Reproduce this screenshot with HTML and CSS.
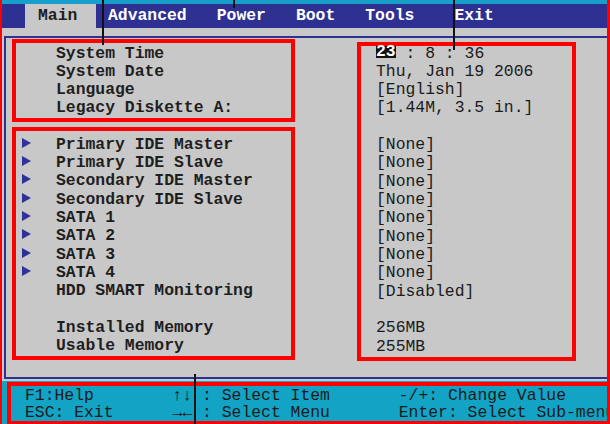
FILE: index.html
```html
<!DOCTYPE html>
<html>
<head>
<meta charset="utf-8">
<title>BIOS Main</title>
<link rel="stylesheet" href="styles.css">
</head>
<body>
<div class="screen">
  <div class="stripe"></div>
  <nav class="menubar">
    <span class="tab tab-main">Main</span>
    <span class="tab tab-adv">Advanced</span>
    <span class="tab">Power</span>
    <span class="tab">Boot</span>
    <span class="tab">Tools</span>
    <span class="tab tab-exit">Exit</span>
  </nav>
  <div class="frame">
    <div class="col-left">
      <div class="box box-sys lbl">
        <div class="row">System Time</div>
        <div class="row">System Date</div>
        <div class="row">Language</div>
        <div class="row">Legacy Diskette A:</div>
      </div>
      <div class="box box-dev lbl">
        <div class="row sub">Primary IDE Master</div>
        <div class="row sub">Primary IDE Slave</div>
        <div class="row sub">Secondary IDE Master</div>
        <div class="row sub">Secondary IDE Slave</div>
        <div class="row sub">SATA 1</div>
        <div class="row sub">SATA 2</div>
        <div class="row sub">SATA 3</div>
        <div class="row sub">SATA 4</div>
        <div class="row">HDD SMART Monitoring</div>
        <div class="row"></div>
        <div class="row">Installed Memory</div>
        <div class="row">Usable Memory</div>
      </div>
    </div>
    <div class="box box-val">
      <div class="vals">
        <div class="row"><span class="hl">23</span> : 8 : 36</div>
        <div class="row">Thu, Jan 19 2006</div>
        <div class="row">[English]</div>
        <div class="row">[1.44M, 3.5 in.]</div>
        <div class="row"></div>
        <div class="row">[None]</div>
        <div class="row">[None]</div>
        <div class="row">[None]</div>
        <div class="row">[None]</div>
        <div class="row">[None]</div>
        <div class="row">[None]</div>
        <div class="row">[None]</div>
        <div class="row">[None]</div>
        <div class="row">[Disabled]</div>
        <div class="row"></div>
        <div class="row">256MB</div>
        <div class="row">255MB</div>
      </div>
    </div>
  </div>
  <footer class="footer">
    <div class="keys">
      <div class="krow">F1:Help        ↑↓ : Select Item       -/+: Change Value</div>
      <div class="krow">ESC: Exit      →← : Select Menu       Enter: Select Sub-menu</div>
    </div>
  </footer>
  <span class="mark m1"></span>
  <span class="mark m2"></span>
  <span class="mark m3"></span>
  <span class="mark m4"></span>
</div>
</body>
</html>
```

FILE: styles.css
```css
html, body {
  margin: 0;
  padding: 0;
  background: #c8c8c8;
}

.screen {
  position: relative;
  width: 610px;
  height: 424px;
  box-sizing: border-box;
  border-left: 2px solid #ff0000;
  border-right: 3px solid #ff0000;
  background: #c8c8c8;
  overflow: hidden;
  font-family: "Courier New", "Nimbus Mono PS", "FreeMono", "Liberation Mono", monospace;
  font-size: 16.4px;
  color: #1e1e1e;
}

.stripe {
  height: 4px;
  background: #189fc9;
}

.menubar {
  display: flex;
  height: 24px;
  line-height: 24px;
  background: #2e3192;
  padding-left: 23px;
  margin-bottom: 8px;
  font-weight: bold;
  color: #ffffff;
  white-space: pre;
}

.tab {
  margin-left: 30px;
}

.tab-main {
  margin-left: 0;
  width: 71px;
  padding-left: 13px;
  box-sizing: border-box;
  background: #c8c8c8;
  color: #1e1e1e;
}

.tab-adv {
  margin-left: 12px;
}

.tab-exit {
  margin-left: 40px;
}

.frame {
  display: flex;
  align-items: flex-start;
  height: 343px;
  box-sizing: border-box;
  margin-left: 2px;
  border: 2px solid #2e3192;
  border-right: 0;
  padding: 1px 0 0 6px;
}

.col-left {
  width: 283px;
  display: flex;
  flex-direction: column;
}

.box {
  border: 4px solid #ff0000;
  box-sizing: border-box;
}

.box-sys {
  padding: 1.5px 0 0 40px;
  margin-bottom: 5px;
}

.box-dev {
  padding: 5px 0 0 40px;
}

.box-val {
  width: 219px;
  height: 319px;
  margin: 3px 0 0 62px;
  padding-left: 15px;
  color: #1a1a1a;
}

.vals {
  margin-top: -1.5px;
}

.row {
  height: 18.33px;
  line-height: 18.33px;
  white-space: pre;
}

.lbl .row {
  font-weight: bold;
}

.sub::before {
  content: "";
  display: inline-block;
  width: 0;
  height: 0;
  border-left: 9px solid #30309a;
  border-top: 5px solid transparent;
  border-bottom: 5px solid transparent;
  margin-left: -34px;
  margin-right: 25px;
  vertical-align: 1px;
}

.hl {
  display: inline-block;
  height: 12px;
  line-height: 12px;
  vertical-align: 2px;
  background: #111111;
  color: #ffffff;
  font-weight: bold;
}

.footer {
  margin-top: 2px;
  height: 43px;
  box-sizing: border-box;
  background: #12a3c5;
  padding: 1px 0 0 5px;
}

.keys {
  height: 42px;
  box-sizing: border-box;
  border: 4px solid #ff0000;
  border-right: 0;
  border-bottom-width: 3px;
  padding: 1px 0 0 14px;
  overflow: hidden;
  color: #1a1a1a;
}

.krow {
  height: 17px;
  line-height: 17px;
  white-space: pre;
}

.mark {
  position: absolute;
  width: 2px;
  background: #111111;
}

.m1 { left: 100px; top: 0; height: 45px; }
.m2 { left: 231px; top: 0; height: 8px; }
.m3 { left: 451px; top: 0; height: 50px; }
.m4 { left: 192px; top: 374px; height: 50px; }
```
